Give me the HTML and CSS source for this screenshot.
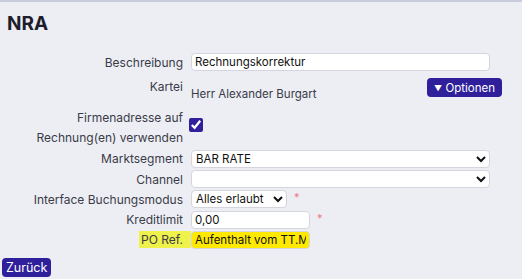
FILE: index.html
```html
<!DOCTYPE html>
<html lang="de">
<head>
  <meta charset="UTF-8">
  <meta name="viewport" content="width=device-width, initial-scale=1.0">
  <title>NRA</title>
  <link rel="stylesheet" href="styles.css">
</head>
<body>
  <div class="page">
    <h1>NRA</h1>
    <form class="form-grid">
      <label class="field-label" for="beschreibung">Beschreibung</label>
      <div class="field-value">
        <input class="text-input wide" id="beschreibung" type="text" value="Rechnungskorrektur">
      </div>

      <div class="field-label top">Kartei</div>
      <div class="field-value kartei">
        <span class="kartei-name">Herr Alexander Burgart</span>
        <button type="button" class="btn options-btn"><span class="caret">&#9660;</span> Optionen</button>
      </div>

      <label class="field-label multi" for="firmenadresse">Firmenadresse auf<br>Rechnung(en) verwenden</label>
      <div class="field-value check">
        <input type="checkbox" id="firmenadresse" checked>
      </div>

      <label class="field-label" for="marktsegment">Marktsegment</label>
      <div class="field-value">
        <select class="select-input wide" id="marktsegment">
          <option>BAR RATE</option>
        </select>
      </div>

      <label class="field-label" for="channel">Channel</label>
      <div class="field-value">
        <select class="select-input wide" id="channel">
          <option></option>
        </select>
      </div>

      <label class="field-label" for="modus">Interface Buchungsmodus</label>
      <div class="field-value">
        <select class="select-input small" id="modus">
          <option>Alles erlaubt</option>
        </select>
        <span class="required">*</span>
      </div>

      <label class="field-label" for="kreditlimit">Kreditlimit</label>
      <div class="field-value">
        <input class="text-input medium" id="kreditlimit" type="text" value="0,00">
        <span class="required">*</span>
      </div>

      <label class="field-label"><span class="highlight">PO Ref.</span></label>
      <div class="field-value">
        <input class="text-input medium marked" type="text" value="Aufenthalt vom TT.MM.">
      </div>
    </form>
    <button type="button" class="btn back-btn">Zurück</button>
  </div>
</body>
</html>
```

FILE: styles.css
```css
body {
  margin: 0;
  background-color: #eceef4;
  font-family: Inter, "Open Sans", sans-serif;
  color: #2b2b38;
  border-top: 2px solid #c9ccdb;
}
h1 {
  margin: 0;
  padding: 10px 7px 0;
  font-size: 19px;
  font-weight: 700;
  color: #1d1d2c;
  height: 51px;
  box-sizing: border-box;
}
.form-grid {
  display: grid;
  grid-template-columns: 183px 311px;
  column-gap: 8px;
  row-gap: 2.25px;
  font-size: 12px;
}
.field-label {
  text-align: right;
  color: #3b3b48;
  display: flex;
  align-items: center;
  justify-content: flex-end;
  min-height: 18px;
}
.field-label.top {
  align-items: flex-start;
  padding-top: 6px;
}
.field-label.multi {
  line-height: 20px;
  padding: 2px 0 0;
}
.field-value {
  display: flex;
  align-items: center;
  gap: 4px;
}
.text-input,
.select-input {
  height: 18px;
  box-sizing: border-box;
  border: 1px solid #d4d5de;
  border-radius: 4px;
  background-color: #fff;
  font-family: inherit;
  font-size: 11.5px;
  color: #111;
  padding: 0 3px;
}
.select-input {
  padding: 0;
}
.wide {
  width: 299px;
}
.small {
  width: 96px;
}
.medium {
  width: 119px;
}
.marked {
  background-color: #ffe900;
}
.highlight {
  background-color: #eef24a;
  padding: 1px 8px 1px 2px;
  margin-right: -8px;
}
.required {
  color: #f07a86;
  font-size: 11px;
  align-self: flex-start;
  margin-left: 3px;
}
.kartei {
  justify-content: space-between;
  align-items: flex-start;
  padding-top: 5px;
  height: 30px;
  box-sizing: border-box;
}
.kartei-name {
  padding-top: 9px;
  font-size: 11.5px;
  color: #3b3b48;
}
.check {
  align-items: flex-start;
  padding-top: 12px;
}
.check input {
  margin: 0 0 0 -2px;
  width: 14px;
  height: 14px;
  accent-color: #2f1f9b;
}
.btn {
  background-color: #2f1f9b;
  color: #fff;
  border: none;
  border-radius: 4px;
  font-family: inherit;
  cursor: pointer;
}
.options-btn {
  font-size: 11.5px;
  padding: 2px 7px;
  height: 19px;
}
.caret {
  font-size: 8px;
  vertical-align: 1px;
}
.back-btn {
  margin: 9px 0 0 2px;
  font-size: 12.5px;
  padding: 1px 4px;
  height: 19px;
}
```
